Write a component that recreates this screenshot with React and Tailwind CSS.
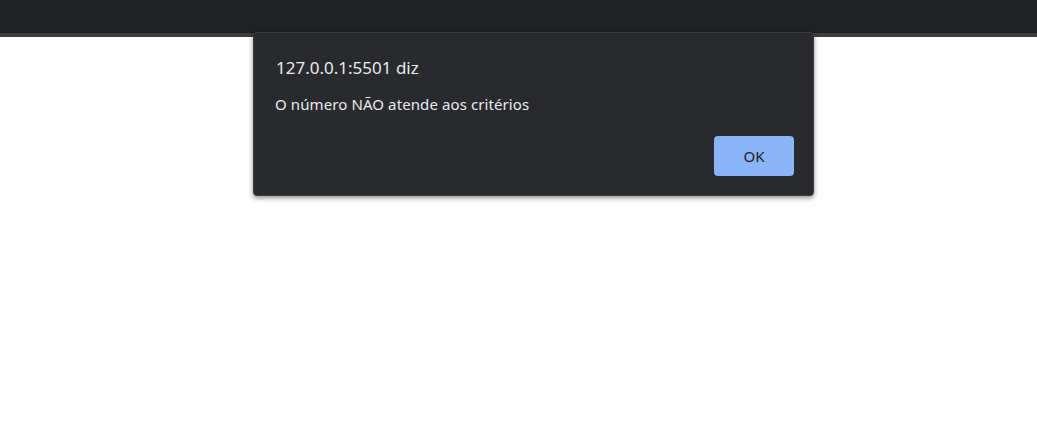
export default function App() {
  return (
    <div className="relative w-[1037px] h-[440px] bg-white overflow-hidden" style={{ fontFamily: '"Noto Sans", "Open Sans", sans-serif' }}>
      {/* browser chrome strip */}
      <div className="h-[33px] bg-[#202124]" />
      <div className="h-[4px] bg-[#3c3d3f]" />

      {/* alert dialog */}
      <div className="absolute left-[253px] top-[32px] w-[561px] h-[164px] bg-[#292a2d] rounded-[4px] shadow-[0_2px_5px_rgba(0,0,0,0.45)] border border-[#3a3b3e] pl-5 pr-[19px] pt-[23px] pb-[19px] flex flex-col">
        <p className="text-[17px] leading-[24px] text-[#e8eaed] pl-[2px]">127.0.0.1:5501 diz</p>
        <p className="mt-[14px] text-[15px] leading-[20px] text-[#e8eaed] pl-[1px] tracking-[0.1px]">O número NÃO atende aos critérios</p>
        <div className="mt-auto flex justify-end">
          <button className="w-[80px] h-[40px] rounded-[4px] bg-[#8ab4f8] text-[#202124] text-[15px]">OK</button>
        </div>
      </div>
    </div>
  )
}
